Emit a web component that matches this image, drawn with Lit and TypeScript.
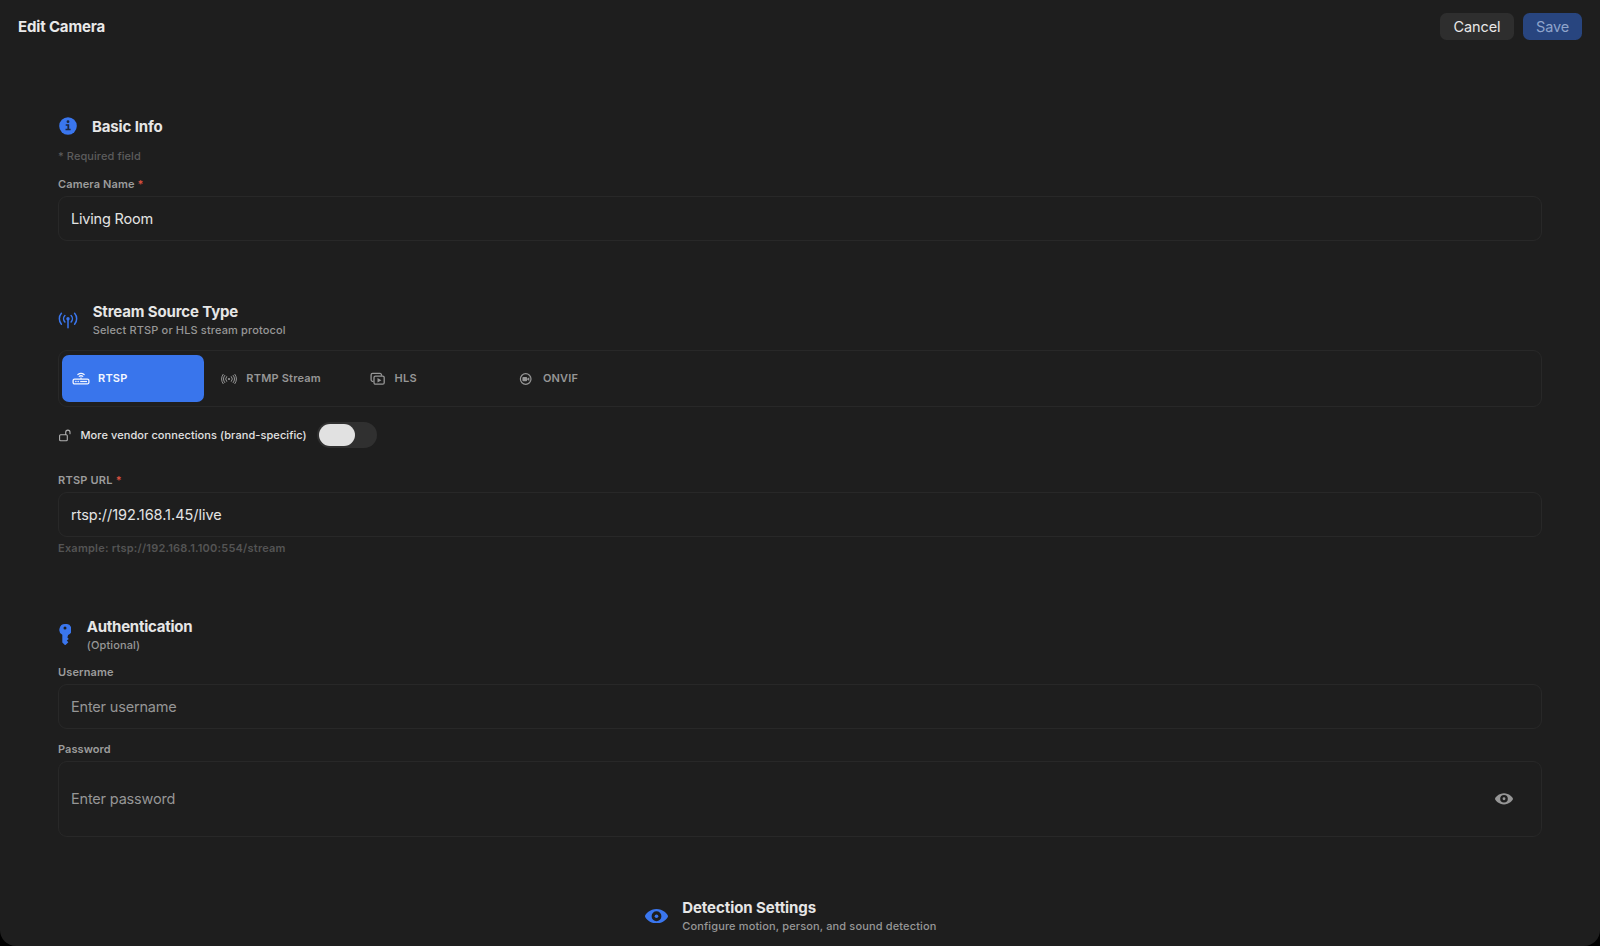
import { LitElement, html, css, svg } from "lit";
import { customElement, property, state } from "lit/decorators.js";
import { classMap } from "lit/directives/class-map.js";

const eye = (w: number, h: number) => html`<svg width=${w} height=${h} viewBox="0 0 24 15" aria-hidden="true">
  <path fill="currentColor" fill-rule="evenodd" d="M12 0C5.4 0 0 5.4 0 7.5S5.4 15 12 15s12-5.4 12-7.5S18.600 0 12 0Zm0 2.400a5.100 5.100 0 1 1 0 10.200 5.100 5.100 0 0 1 0-10.200Z"/>
  <circle cx="12" cy="7.500" r="1.900" fill="currentColor"/>
</svg>`;

const infoIcon = html`<svg width="18" height="18" viewBox="0 0 18 18">
  <circle cx="9" cy="9" r="8.800" fill="currentColor"/>
  <g fill="#1c2740"><circle cx="9" cy="4.700" r="1.400"/><path d="M6.700 7.200h3.500v4.600h1.400v1.500H6.500v-1.500h1.900V8.700H6.700z"/></g>
</svg>`;

const antennaIcon = html`<svg width="20" height="17" viewBox="0 0 20 17" fill="none" stroke="currentColor" stroke-width="1.500" stroke-linecap="round">
  <circle cx="10" cy="6.800" r="1.700" fill="currentColor" stroke="none"/>
  <path d="M10 7.500V15.800M6.900 3.600a4.600 4.600 0 0 0 0 6.400M13.100 3.600a4.600 4.600 0 0 1 0 6.400M3.400 1.300a8.400 8.400 0 0 0 0 11M16.600 1.300a8.400 8.400 0 0 1 0 11"/>
</svg>`;

const keyIcon = html`<svg width="12" height="21" viewBox="0 0 12 21">
  <path fill="currentColor" fill-rule="evenodd" d="M6 .1a5.700 5.700 0 0 0-2.700 10.700v7.700L5.900 20.900c.2.200.4.200.6 0l2.600-2.400c.2-.2.200-.4 0-.6l-1.300-1.300 1.600-1.400c.2-.2.200-.4 0-.6l-1-1.200L9.100 11A5.700 5.700 0 0 0 6 .1Zm0 2.300a1.500 1.500 0 1 1 0 3 1.500 1.500 0 0 1 0-3Z"/>
</svg>`;

const lockIcon = html`<svg width="12" height="13" viewBox="0 0 12 13" fill="none" stroke="currentColor" stroke-width="1.100" stroke-linecap="round">
  <rect x=".6" y="5.700" width="7.700" height="6" rx="1"/>
  <path d="M6.700 5.500V3.300a2.150 2.150 0 0 1 4.300 0v1.500"/>
</svg>`;

const icons: Record<string, unknown> = {
  rtsp: svg`<g fill="none" stroke="currentColor" stroke-width="1.300" stroke-linecap="round">
    <rect x="1.100" y="9.100" width="15.800" height="4.800" rx="1.500"/>
    <path d="M5.900 4.500a5.200 5.200 0 0 1 6.200 0M7.300 6.300a3 3 0 0 1 3.400 0"/></g>
    <g fill="currentColor"><path d="M8.400 7.500h1.200v1.500H8.400z"/><circle cx="3.900" cy="11.500" r=".75"/><circle cx="6.200" cy="11.500" r=".75"/><path d="M8.200 10.900h6.800v1.200H8.200z"/></g>`,
  rtmp: svg`<g fill="none" stroke="currentColor" stroke-width="1" stroke-linecap="round">
    <path d="M6.600 6.600a3.600 3.600 0 0 0 0 4.800M11.400 6.600a3.600 3.600 0 0 1 0 4.800M4.800 5.400a5.800 5.800 0 0 0 0 7.200M13.200 5.400a5.800 5.800 0 0 1 0 7.200M3.100 4.400a8 8 0 0 0 0 9.200M14.900 4.400a8 8 0 0 1 0 9.200"/></g>
    <circle cx="9" cy="9" r="1.100" fill="currentColor"/>`,
  hls: svg`<g fill="none" stroke="currentColor" stroke-width="1.300" stroke-linejoin="round">
    <path d="M4.500 11.300H3.600A1.500 1.500 0 0 1 2.100 9.800V4.900a1.500 1.500 0 0 1 1.500-1.500h7.400A1.500 1.500 0 0 1 12.500 4.900v.9"/>
    <rect x="5" y="6.100" width="10.200" height="8.100" rx="1.500"/></g>
    <path fill="currentColor" d="M8.500 7.900v4.600l3.900-2.300z"/>`,
  onvif: svg`<circle cx="8.700" cy="9" r="5.300" fill="none" stroke="currentColor" stroke-width="1.200"/>
    <rect x="5.400" y="6.900" width="4.700" height="4.300" rx="1" fill="currentColor"/><path fill="currentColor" d="m10.100 8.700 2.200-1.500v3.700l-2.200-1.500z"/>`,
};

@customElement("section-head")
class SectionHead extends LitElement {
  @property() heading = "";
  @property() note = "";
  static styles = css`
    :host { display: flex; align-items: center; }
    .icon { display: flex; flex: none; justify-content: center; width: var(--icon-w, 18px); margin-right: var(--icon-gap, 15px); padding-top: var(--icon-drop, 0); color: #3a76ee; }
    h2 { margin: 0; font-size: 15px; font-weight: 700; line-height: 20px; letter-spacing: var(--track, -0.14px); color: #e6e6e6; }
    p { margin: 1px 0 0; font-size: 11px; font-weight: 450; line-height: 14px; letter-spacing: 0.14px; color: #979797; }
  `;
  render() {
    return html`<div class="icon"><slot></slot></div>
      <div><h2>${this.heading}</h2>${this.note ? html`<p>${this.note}</p>` : ""}</div>`;
  }
}

@customElement("app-root")
class AppRoot extends LitElement {
  @state() source = "rtsp";
  static styles = css`
    :host { display: block; height: 946px; overflow: hidden; background: #000; font-family: Inter, "Liberation Sans", sans-serif; }
    * { box-sizing: border-box; }
    svg { display: block; flex: none; }
    .window { height: 946px; overflow: hidden; border-radius: 0 0 16px 16px; background: #1e1e1e; color: #e4e4e4; }
    header { display: flex; align-items: center; height: 53px; padding: 0 18px; gap: 9px; }
    h1 { flex: 1; margin: 0; padding-top: 1px; font-size: 15px; font-weight: 700; line-height: 20px; letter-spacing: -0.15px; color: #e9e9e9; }
    button { font-family: inherit; border: 0; margin: 0; }
    .btn { height: 27px; padding: 0; border-radius: 6.500px; font-size: 14.500px; letter-spacing: -0.12px; color: #e8e8e8; background: #2e2e2e; width: 74px; }
    .save { width: 59px; color: #8fa4cb; background: #28457f; }
    main { padding: 64px 58px 0; }
    section { display: flex; flex-direction: column; margin-bottom: 61px; }
    .small { font-size: 11px; line-height: 14px; letter-spacing: 0.13px; }
    .required { margin-top: 12px; font-weight: 450; color: #5c5c5c; letter-spacing: 0.08px; }
    .label { margin: 14px 0 5px; font-weight: 600; color: #9c9c9c; }
    .label i { font-style: normal; color: #d8503f; }
    .user { margin-top: 13px; }
    .pass { margin-top: 13px; letter-spacing: 0.06px; }
    .url { letter-spacing: 0.22px; margin: 25px 0 5px; }
    .field { display: flex; align-items: center; height: 45px; padding: 0 28px 0 12px; border: 1px solid #282828; border-radius: 9px; font-size: 14.500px; letter-spacing: -0.2px; color: #e4e4e4; }
    .field span { flex: 1; }
    .field.empty { color: #969696; letter-spacing: -0.18px; }
    .field.address { letter-spacing: -0.03px; }
    .field.tall { height: 76px; }
    .tall span { padding-bottom: 1px; }
    .example { margin-top: 4px; font-weight: 600; letter-spacing: 0.22px; color: #545454; }
    .tabs { display: flex; gap: 6.300px; height: 57px; margin-top: 13px; padding: 4px 3px; border: 1px solid #282828; border-radius: 9px; }
    .tab { display: flex; align-items: center; gap: 8px; width: 142px; height: 47px; padding: 0 0 1px 10px; border-radius: 7px; background: none; color: #969696; font-size: 11px; font-weight: 600; letter-spacing: 0.2px; }
    .tab svg { margin-top: 1px; }
    .tab.on { background: #3975ec; color: #f4f7ff; }
    .vendor { display: flex; align-items: center; height: 26px; margin-top: 15px; font-weight: 500; letter-spacing: 0.08px; color: #e2e2e2; }
    .vendor svg { margin-right: 10px; margin-left: 0.500px; color: #b0b0b0; }
    .switch { display: flex; width: 60px; height: 26px; margin-left: 10px; padding: 2px; border-radius: 13px; background: #303030; }
    .knob { width: 36px; height: 22px; border-radius: 11px; background: #e1e1e1; }
    .reveal { color: #969696; }
    .basic { --icon-w: 20px; --icon-gap: 14px; }
    .basic svg { margin-top: -2px; }
    .stream { margin-bottom: 62px; --icon-w: 20px; --icon-gap: 14.700px; --icon-drop: 1px; --track: -0.14px; }
    .auth { --icon-w: 13px; --icon-gap: 15.700px; --track: -0.24px; }
    .detect { align-items: center; padding-right: 19px; --icon-w: 23px; --icon-gap: 14.700px; --icon-drop: 1px; --track: -0.06px; }
  `;
  render() {
    const tabs = [["rtsp", "RTSP"], ["rtmp", "RTMP Stream"], ["hls", "HLS"], ["onvif", "ONVIF"]];
    return html`<div class="window">
      <header><h1>Edit Camera</h1><button class="btn">Cancel</button><button class="btn save">Save</button></header>
      <main>
        <section class="basic">
          <section-head heading="Basic Info">${infoIcon}</section-head>
          <div class="small required">* Required field</div>
          <div class="small label">Camera Name <i>*</i></div>
          <div class="field"><span>Living Room</span></div>
        </section>
        <section class="stream">
          <section-head heading="Stream Source Type" note="Select RTSP or HLS stream protocol">${antennaIcon}</section-head>
          <div class="tabs">
            ${tabs.map(([id, name]) => html`<button class=${classMap({ tab: true, on: id === this.source })} @click=${() => (this.source = id)}>
              <svg width="18" height="18" viewBox="0 0 18 18">${icons[id]}</svg>${name}</button>`)}
          </div>
          <div class="small vendor">${lockIcon}More vendor connections (brand-specific)<div class="switch"><div class="knob"></div></div></div>
          <div class="small label url">RTSP URL <i>*</i></div>
          <div class="field address"><span>rtsp://192.168.1.45/live</span></div>
          <div class="small example">Example: rtsp://192.168.1.100:554/stream</div>
        </section>
        <section class="auth">
          <section-head heading="Authentication" note="(Optional)">${keyIcon}</section-head>
          <div class="small label user">Username</div>
          <div class="field empty"><span>Enter username</span></div>
          <div class="small label pass">Password</div>
          <div class="field empty tall"><span>Enter password</span><div class="reveal">${eye(18, 11.5)}</div></div>
        </section>
        <section class="detect">
          <section-head heading="Detection Settings" note="Configure motion, person, and sound detection">${eye(23, 14.5)}</section-head>
        </section>
      </main>
    </div>`;
  }
}
